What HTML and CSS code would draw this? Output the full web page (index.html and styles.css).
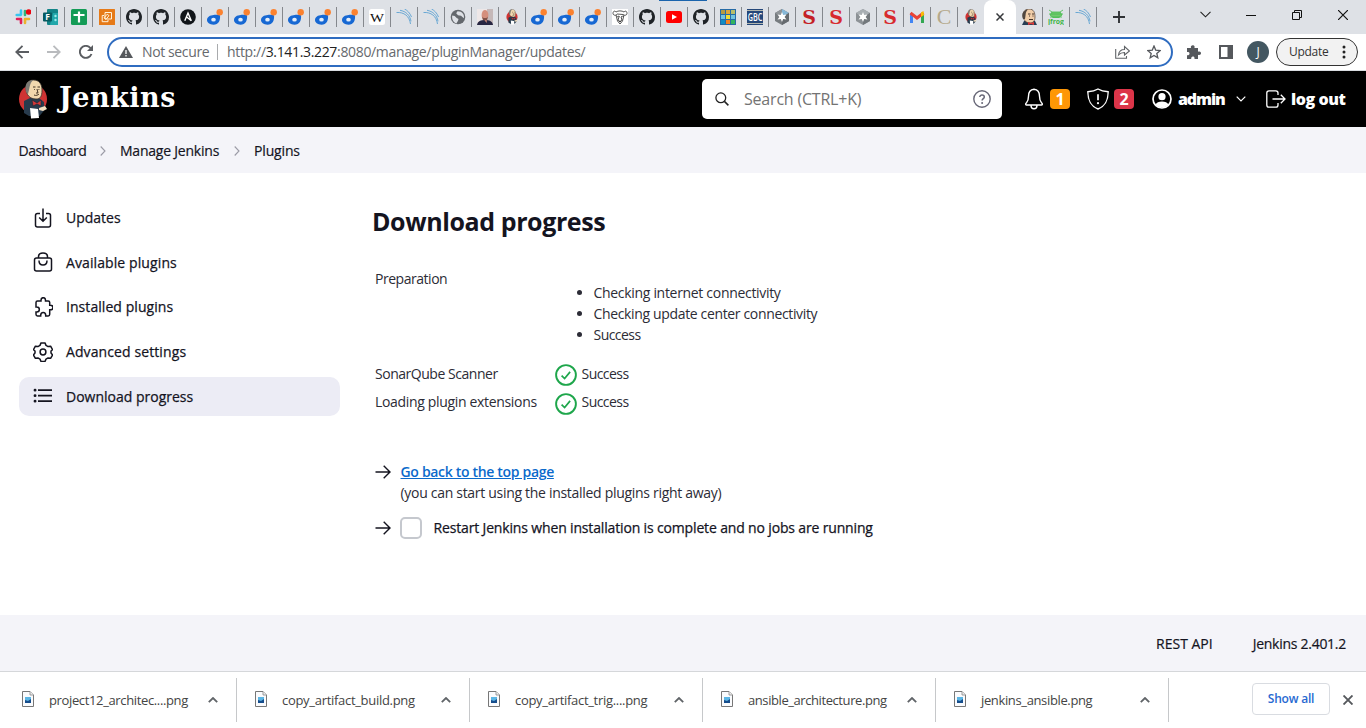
FILE: index.html
```html
<!DOCTYPE html>
<html lang="en">
<head>
<meta charset="utf-8">
<title>Download progress [Jenkins]</title>
<link rel="stylesheet" href="styles.css">
</head>
<body>
<svg class="defs" width="0" height="0">
  <symbol id="slack" viewBox="0 0 16 16"><g fill="none" stroke-width="2.6" stroke-linecap="round"><path stroke="#36c5f0" d="M6 1.5v4M1.7 6h4"/><path stroke="#2eb67d" d="M10 2v4"/><path stroke="#ecb22e" d="M10 10h4M10 10v4"/><path stroke="#e01e5a" d="M6 10v4M2 10h3"/></g><circle cx="13.6" cy="3" r="2.8" fill="#eb0510"/></symbol>
  <symbol id="aws" viewBox="0 0 16 16"><rect width="16" height="16" rx=".5" fill="#e67a18"/><g fill="none" stroke="#fff3dc"><path d="M6 3.5h6.500V10H6z"/><path d="M8.200 5.200l1.800 1.400-3 3.700-2-1.500zM5 6.500H3.200v6.200H9V11"/></g></symbol>
  <symbol id="sheets" viewBox="0 0 16 16"><rect width="16" height="16" rx="1.5" fill="#139b56"/><path d="M8 2.500v11M2.500 6h11" stroke="#fff" stroke-width="2.200"/></symbol>
  <symbol id="github" viewBox="0 0 16 16"><path fill="#1f2327" d="M8 0C3.58 0 0 3.58 0 8c0 3.54 2.29 6.53 5.47 7.59.4.07.55-.17.55-.38 0-.19-.01-.82-.01-1.49-2.01.37-2.53-.49-2.69-.94-.09-.23-.48-.94-.82-1.13-.28-.15-.68-.52-.01-.53.63-.01 1.08.58 1.23.82.72 1.21 1.87.87 2.33.66.07-.52.28-.87.51-1.07-1.78-.2-3.64-.89-3.64-3.95 0-.87.31-1.59.82-2.15-.08-.2-.36-1.02.08-2.12 0 0 .67-.21 2.2.82.64-.18 1.32-.27 2-.27s1.36.09 2 .27c1.53-1.04 2.2-.82 2.2-.82.44 1.1.16 1.92.08 2.12.51.56.82 1.27.82 2.15 0 3.07-1.87 3.75-3.65 3.95.29.25.54.73.54 1.48 0 1.07-.01 1.93-.01 2.2 0 .21.15.46.55.38A8.01 8.01 0 0 0 16 8c0-4.42-3.58-8-8-8z"/></symbol>
  <symbol id="ansible" viewBox="0 0 16 16"><circle cx="8" cy="8" r="7.8" fill="#111519"/><path d="M4.800 11.800L8 4l3.300 7.700L6.700 8" fill="none" stroke="#fff" stroke-width="1.400"/></symbol>
  <symbol id="drop" viewBox="0 0 16 16"><path d="M13 6.200c.6 5-1.400 9.500-6.500 9.500-4 0-6.500-2.200-6.500-4.700 0-3 3-5 6.700-5.100 2.300-.1 4.500 0 6.300.3z" fill="#1768d3"/><ellipse cx="6.500" cy="10.700" rx="2.300" ry="1.900" fill="#e5edf8"/><circle cx="12.700" cy="3.200" r="3.200" fill="#fb8230"/></symbol>
  <symbol id="sonar" viewBox="0 0 16 16"><g fill="none" stroke="#69a8d4"><path d="M.5 3.500C8 3 13.500 7 14.500 15"/><path d="M4 1.300c6 1 10 5 11 11"/><path d="M8.500 0c3 1.500 5.500 4 7 8"/></g></symbol>
  <symbol id="globe" viewBox="0 0 16 16"><circle cx="8" cy="8" r="7.300" fill="#64686d"/><path d="M2.200 6.500l2.500.4 2 2.200 1.800.8-.5 1.800-1.600 2.700C4 13.400 1.600 11 2.200 6.500zM7.500 2.200l-1.300 2L8 6.200l3 .5 2.800 2.500c1-3.600-1.700-7.100-6.300-7z" fill="#dee1e6"/></symbol>
  <symbol id="person" viewBox="0 0 16 16"><path fill="#eee7e7" d="M0 0h16v16H0z"/><path fill="#c5b8b8" d="M10 0h6v16h-6z"/><path d="M0 16c.5-4 4-5 8-5s7.500 1 8 5z" fill="#272642"/><path d="M6 9h4l-.4 5z" fill="#d58f7c"/><ellipse cx="8" cy="6" rx="3.400" ry="5" fill="#d58f7c"/><path d="M5 7.500c1 2 5 2 6 0l-1 3.800H6z" fill="#815248"/></symbol>
  <symbol id="jenkins" viewBox="0 0 28 40"><ellipse cx="14" cy="20" rx="14" ry="14.500" fill="#cf3333"/><path d="M5 22l6-3h9l5 4 .5 8-5 6H10l-5-3z" fill="#283b4d"/><path d="M7 9C7 3 10.500 1 14.500 1 20 1 23 5 23 11c0 7-2 9-6 9-6 0-10-4-10-11z" fill="#f1d8ae" stroke="#35312c" stroke-width=".8"/><path d="M7 13C5 5 9 1 14.500 1 11 3.500 11 7 10 11l-1 4z" fill="#7b7973"/><path d="M14 8h2.500M18.500 8H21M15 10.500h.8M19.500 10.500h.8M15 16c2 1 4 0 5-1M18 10l1 4h-2" stroke="#433425" fill="none"/><path d="M13 21l5 3 4-3v6l-4-2-4 2z" fill="#d33939" stroke="#172536" stroke-width=".6"/><path d="M11 29l8 1 1 9-8 .5z" fill="#fff"/><path d="M20 29l6-2 2 3-4 2-4-1z" fill="#f3dfc0"/></symbol>
  <symbol id="butler" viewBox="0 0 16 16"><path d="M1 16l2-4 5-1 6 1 2 4z" fill="#273e54"/><path d="M2 6C2 2 5 0 8 0c5 0 6 4 6 8 0 4-2 6-5 6-4 0-7-3-7-8z" fill="#f0cda8" stroke="#4b3a31" stroke-width=".7"/><path d="M2 10C0 4 3 1 7 .5 4 3 5 6 4 10z" fill="#504740"/><path d="M7 5h2.500M11 5h2M8 7h1M11.500 7h1M8 10.500h4" stroke="#453328"/><path d="M7 13l3 1 3-1v3l-3-1-3 1z" fill="#dc3939"/></symbol>
  <symbol id="gnu" viewBox="0 0 16 16"><path fill="#fff" d="M0 0h16v16H0z"/><g fill="none" stroke="#292929" stroke-width=".8"><path d="M4 3C2 1 1 3 1 4.500s2 2.500 4 1M12 3c2-2 3 0 3 1.500s-2 2.500-4 1M4 3c2-1.500 6-1.500 8 0M5 5l6 .5M4 6l1.500 6L8 15l2.500-3L12 6M5 8l2-1 .5 1M9 8l1.500-1 1 1M7 8l-1 3 2 1.500 2-1.500-1-3M7 12l1 1 1-1"/></g></symbol>
  <symbol id="youtube" viewBox="0 0 16 16"><rect y="2" width="16" height="12" rx="2.500" fill="#f00"/><path d="M6 5.200v5.600L11 8z" fill="#fff"/></symbol>
  <symbol id="grid" viewBox="0 0 16 16"><path fill="#276ba6" d="M0 0h16v16H0z"/><path fill="#b49b42" d="M1 1h4v4H1z"/><path fill="#dca53a" d="M6 1h4v4H6z"/><path fill="#b9be68" d="M11 1h4v4h-4z"/><path fill="#72c4df" d="M1 6h4v4H1zM11 6h4v4h-4z"/><path fill="#f1dd35" d="M6 6h4v4H6z"/><path fill="#128dc4" d="M1 11h4v4H1z"/><path fill="#f28424" d="M6 11h4v4H6z"/><path fill="#32b45e" d="M11 11h4v4h-4z"/></symbol>
  <symbol id="hex" viewBox="0 0 16 16"><path d="M8 0l7 4v8l-7 4-7-4V4z" fill="#8d9296"/><path d="M8 0l7 4-7 4-7-4z" fill="#a9afb3"/><path d="M8 8l7-4v8l-7 4z" fill="#74797d"/><path d="M8 3l1.200 3 3.300-.6L10.600 8l1.900 2.600-3.300-.6L8 13l-1.200-3-3.300.6L5.400 8 3.500 5.400l3.300.6z" fill="#fff"/></symbol>
  <symbol id="hexblue" viewBox="0 0 16 16"><path d="M8 0l7 4v8l-7 4-7-4V4z" fill="#777c80"/><path d="M8 0l7 4-7 4z" fill="#86b8d8"/><path d="M8 0L1 4l7 4z" fill="#8f9498"/><path d="M8 8l7-4v8l-7 4z" fill="#666b6f"/><path d="M8 3l1.200 3 3.300-.6L10.600 8l1.900 2.600-3.300-.6L8 13l-1.200-3-3.300.6L5.400 8 3.500 5.400l3.300.6z" fill="#fff"/></symbol>
  <symbol id="gmail" viewBox="0 0 16 16"><path d="M2.500 14V4" stroke="#4285f4" stroke-width="3"/><path d="M13.500 14V4" stroke="#34a853" stroke-width="3"/><path d="M1.500 4L8 9l6.500-5" fill="none" stroke="#ea4335" stroke-width="3"/><path d="M12 3.500l2.500-1.500L15 6l-3 2z" fill="#fbbc04"/></symbol>
  <symbol id="file" viewBox="0 0 12 16"><path d="M.5.5H8L11.500 4v11.500H.5z" fill="#fafbfd" stroke="#777"/><path d="M8 .5V4h3.500" fill="#eee" stroke="#888" stroke-width=".8"/><path fill="#164d8c" d="M3 6h6v6H3z"/><path fill="#5cb6e5" d="M3 6h6v2L6 10 3 9z"/></symbol>
  <symbol id="up" viewBox="0 0 10 6"><path d="M.8 5.200L5 1l4.200 4.200" fill="none" stroke="#606468" stroke-width="1.800"/></symbol>
  <symbol id="crumb" viewBox="0 0 6 10"><path d="M.7.5L5 5 .7 9.500" fill="none" stroke="#9b9ba6" stroke-width="1.100"/></symbol>
  <symbol id="arrow" viewBox="0 0 16 14"><path d="M.5 7h14M8.700.8L15 7l-6.300 6.200" fill="none" stroke="#14141f" stroke-width="1.400"/></symbol>
  <symbol id="ok" viewBox="0 0 22 22"><circle cx="11" cy="11" r="9.900" fill="none" stroke="#1ea64b" stroke-width="1.900"/><path d="M6.600 11.600l3 3 5.500-6.700" fill="none" stroke="#1ea64b" stroke-width="1.700"/></symbol>
</svg>

<header class="browser">
  <div class="tabstrip">
    <i class="load"></i>
    <div class="tab wide"><svg><use href="#slack"/></svg></div><div class="tab wide"><svg viewBox="0 0 16 16"><rect x="4" width="11" height="16" rx="1" fill="#138488"/><path d="M10 4h5v12H7z" fill="#21a7aa"/><circle cx="12.500" cy="7" r="1.200" fill="#9beced"/><circle cx="12.500" cy="11" r="1.200" fill="#9beced"/><rect y="3.500" width="9" height="9" rx="1" fill="#065b61"/><text x="2.300" y="11" font-size="8.500" font-weight="700" fill="#fff">F</text></svg></div><div class="tab wide"><svg><use href="#sheets"/></svg></div><div class="tab wide"><svg><use href="#aws"/></svg></div>
    <div class="tab"><svg><use href="#github"/></svg></div><div class="tab"><svg><use href="#github"/></svg></div><div class="tab"><svg><use href="#ansible"/></svg></div>
    <div class="tab"><svg><use href="#drop"/></svg></div><div class="tab"><svg><use href="#drop"/></svg></div><div class="tab"><svg><use href="#drop"/></svg></div><div class="tab"><svg><use href="#drop"/></svg></div><div class="tab"><svg><use href="#drop"/></svg></div><div class="tab"><svg><use href="#drop"/></svg></div>
    <div class="tab"><svg viewBox="0 0 16 16"><rect width="16" height="16" rx="2.500" fill="#fff"/><text class="serif" x="1" y="12.700" font-size="13.500" textLength="14" lengthAdjust="spacingAndGlyphs" fill="#111">W</text></svg></div><div class="tab"><svg><use href="#sonar"/></svg></div><div class="tab"><svg><use href="#sonar"/></svg></div><div class="tab"><svg><use href="#globe"/></svg></div><div class="tab"><svg><use href="#person"/></svg></div><div class="tab"><svg><use href="#jenkins"/></svg></div>
    <div class="tab"><svg><use href="#drop"/></svg></div><div class="tab"><svg><use href="#drop"/></svg></div><div class="tab"><svg><use href="#drop"/></svg></div><div class="tab"><svg><use href="#gnu"/></svg></div><div class="tab"><svg><use href="#github"/></svg></div><div class="tab"><svg><use href="#youtube"/></svg></div><div class="tab"><svg><use href="#github"/></svg></div>
    <div class="tab"><svg><use href="#grid"/></svg></div><div class="tab"><svg viewBox="0 0 16 16"><path fill="#254779" d="M0 0h16v16H0z"/><path stroke="#d8d4bd" stroke-width=".8" d="M0 1.500h16M0 14.500h16"/><text x=".7" y="12" font-size="11" font-weight="600" textLength="14.600" lengthAdjust="spacingAndGlyphs" fill="#fff">GBC</text></svg></div><div class="tab"><svg><use href="#hexblue"/></svg></div>
    <div class="tab"><span class="fav-s">S</span></div><div class="tab"><span class="fav-s light">S</span></div><div class="tab"><svg><use href="#hex"/></svg></div><div class="tab"><span class="fav-s light">S</span></div><div class="tab"><svg><use href="#gmail"/></svg></div><div class="tab"><span class="fav-c">C</span></div><div class="tab before"><svg><use href="#jenkins"/></svg></div>
    <div class="active"><svg width="8" height="8" viewBox="0 0 8 8"><path d="M.5.500l7 7m0-7l-7 7" stroke="#36383b" stroke-width="1.500"/></svg></div>
    <div class="tab"><svg><use href="#butler"/></svg></div><div class="tab"><svg viewBox="0 0 16 16"><path d="M1 1l3 2M15 1l-3 2M1 5h14M2 8h12M4 3h8l2 3-3 2.500H5L2 6z" stroke="#45bd4d" stroke-width=".8" fill="#72c86f"/><text x="0" y="14.500" font-size="7.500" font-weight="700" textLength="16" lengthAdjust="spacingAndGlyphs" fill="#3eb649">jfrog</text></svg></div><div class="tab"><svg><use href="#sonar"/></svg></div>
    <svg class="newtab" width="12" height="12" viewBox="0 0 12 12"><path d="M6 0v12M0 6h12" stroke="#303236" stroke-width="1.900"/></svg>
    <div class="window">
      <svg width="11" height="7" viewBox="0 0 11 7"><path d="M.5.800l5 5 5-5" fill="none" stroke="#222" stroke-width="1.100"/></svg>
      <svg width="10" height="10" viewBox="0 0 10 10"><path d="M0 5.500h10" stroke="#111"/></svg>
      <svg width="10" height="10" viewBox="0 0 10 10"><path d="M.5 2.500h7v7h-7zM2.500 2.500v-2h7v7h-2" fill="none" stroke="#111"/></svg>
      <svg width="10" height="10" viewBox="0 0 10 10"><path d="M0 0l10 10M10 0L0 10" stroke="#111" stroke-width="1.200"/></svg>
    </div>
  </div>
  <div class="toolbar">
    <svg class="back" width="14" height="14" viewBox="0 0 14 14"><path d="M14 7H1.500M7.500.8L1.300 7l6.200 6.200" fill="none" stroke="#5a5d61" stroke-width="1.800"/></svg>
    <svg class="forward" width="14" height="14" viewBox="0 0 14 14"><path d="M0 7h12.500M6.500.8L12.700 7l-6.200 6.200" fill="none" stroke="#b9bbbe" stroke-width="1.800"/></svg>
    <svg class="reload" width="14" height="14" viewBox="0 0 14 14"><path d="M12.500 9A6 6 0 1 1 11.300 2.800L13 4.600" fill="none" stroke="#5a5d61" stroke-width="1.900"/><path d="M14 0v6H8z" fill="#5a5d61"/></svg>
    <div class="omnibox">
      <svg width="14" height="12" viewBox="0 0 14 12"><path d="M7 0l7 12H0z" fill="#55585c"/><path d="M7 4v4M7 9v1.500" stroke="#fff" stroke-width="1.300"/></svg>
      <span class="notsecure">Not secure</span><i></i>
      <span class="url">http://<b>3.141.3.227</b>:8080/manage/pluginManager/updates/</span>
      <svg class="share" width="15" height="14" viewBox="0 0 15 14"><path d="M.7 4v9.300h10.800V11M3.500 10c.5-4 2.500-5.500 6-5.500V1.500l5 4.500-5 4V7.500c-3 0-4.500.7-6 2.500z" fill="none" stroke="#606367" stroke-width="1.100"/></svg>
      <svg width="14" height="14" viewBox="0 0 14 14"><path d="M7 1l1.700 4.100 4.500.4-3.400 2.900 1 4.400L7 10.500l-3.800 2.300 1-4.400L.8 5.500l4.500-.4z" fill="none" stroke="#55585c" stroke-width="1.300"/></svg>
    </div>
    <svg class="puzzle" width="15" height="15" viewBox="0 0 15 15"><path d="M1 3h4C4.200.8 6 0 7 .2c1.500.2 2 1.500 1.400 2.800H12v3.800c2-.8 3 .3 3 1.500s-1.300 2.200-3 1.400V14H8.500c.3-2-.7-2.500-1.700-2.500S5 12.500 5.200 14H1v-3.800c2 0 2.500-.8 2.500-1.800S2.800 6.800 1 7z" fill="#55585c"/></svg>
    <svg class="panel" width="14" height="14" viewBox="0 0 14 14"><path d="M0 0h14v14H0z" fill="#55585c"/><path d="M2 2h6.500v10H2z" fill="#fff"/></svg>
    <span class="avatar">J</span>
    <div class="update"><span>Update</span><svg width="4" height="14" viewBox="0 0 4 14"><g fill="#222"><circle cx="2" cy="2" r="1.500"/><circle cx="2" cy="7" r="1.500"/><circle cx="2" cy="12" r="1.500"/></g></svg></div>
  </div>
</header>

<div class="jheader">
  <svg class="logo" width="28" height="40"><use href="#jenkins"/></svg><span class="wordmark">Jenkins</span>
  <div class="search"><svg width="14" height="14" viewBox="0 0 14 14"><circle cx="5.800" cy="5.800" r="4.900" fill="none" stroke="#222" stroke-width="1.300"/><path d="M9.400 9.400l4 4" stroke="#222" stroke-width="1.500"/></svg><span>Search (CTRL+K)</span><svg width="18" height="18" viewBox="0 0 18 18"><circle cx="9" cy="9" r="8.200" fill="none" stroke="#676777" stroke-width="1.400"/><path d="M6.800 7.100c0-3 4.500-2.700 4.500-.2 0 1.700-2.200 1.700-2.200 3.600" fill="none" stroke="#676777" stroke-width="1.500"/><circle cx="9.100" cy="13" r="1" fill="#676777"/></svg></div>
  <svg class="bell" width="20" height="22" viewBox="0 0 20 22"><path d="M10 1.200c-4 .3-5.500 3.300-5.500 7 0 4.800-1.200 5.300-2.700 7.500-.4.700 0 1.300.7 1.300h15c.7 0 1.100-.6.700-1.300-1.500-2.200-2.700-2.700-2.700-7.500 0-3.700-1.500-6.700-5.500-7zM7 17.500c0 4.300 6 4.300 6 0" fill="none" stroke="#fff" stroke-width="1.400"/></svg>
  <span class="badge orange">1</span>
  <svg class="shield" width="22" height="22" viewBox="0 0 22 22"><path d="M11 1C8 2.800 4.500 3.500.8 3.800 1 12 3 18 11 21c8-3 10-9 10.200-17.200C17.500 3.500 14 2.800 11 1z" fill="none" stroke="#fff" stroke-width="1.400"/><path d="M11 6.200v6" stroke="#fff" stroke-width="1.700"/><circle cx="11" cy="15.200" r="1.100" fill="#fff"/></svg>
  <span class="badge red">2</span>
  <svg class="user" width="20" height="20" viewBox="0 0 20 20"><circle cx="10" cy="10" r="9" fill="none" stroke="#fff" stroke-width="1.700"/><circle cx="10" cy="7.700" r="3.600" fill="#fff"/><path d="M3.700 15.500c1-4 11.600-4 12.600 0-2.500 4-10 4-12.600 0z" fill="#fff"/></svg>
  <span class="admin">admin</span>
  <svg class="caret" width="10" height="6" viewBox="0 0 10 6"><path d="M.7.700L5 5 9.300.700" fill="none" stroke="#fff" stroke-width="1.200"/></svg>
  <svg class="exit" width="20" height="18" viewBox="0 0 20 18"><path d="M12 5V3c0-1.500-.8-2.200-2.200-2.200H3C1.600.8.800 1.600.8 3v12c0 1.400.8 2.200 2.200 2.200h6.800c1.400 0 2.200-.8 2.200-2.200v-2M6.500 9H19M14.800 4.800L19 9l-4.200 4.200" fill="none" stroke="#fff" stroke-width="1.300"/></svg>
  <span class="logout">log out</span>
</div>

<nav class="crumbs"><span class="c1">Dashboard</span><svg><use href="#crumb"/></svg><span class="c2">Manage Jenkins</span><svg><use href="#crumb"/></svg><span class="c3">Plugins</span></nav>

<main>
  <aside>
    <a><svg viewBox="0 0 20 20"><path d="M7 5.500H4.500c-1.200 0-2 .8-2 2V17c0 1.200.8 2 2 2h11c1.200 0 2-.8 2-2V7.500c0-1.200-.8-2-2-2H13M10 .5v12.700M6.200 9.500L10 13.300l3.800-3.800"/></svg><span>Updates</span></a>
    <a><svg viewBox="0 0 20 20"><rect x="1.500" y="6" width="17" height="13" rx="2"/><path d="M5.500 6V4.800C5.500-.3 14.500-.3 14.500 4.800V6M6 8.500c0 6 8 6 8 0"/></svg><span class="s2">Available plugins</span></a>
    <a><svg viewBox="0 0 20 20"><path d="M3 5.500c0-1 .5-1.500 1.500-1.500H8V3.200C8-.2 12.500-.2 12.500 3.200V4h2.700c1 0 1.500.6 1.500 1.500V8.200h.7c3.400 0 3.400 4.600 0 4.600h-.7v4.500c0 1-.5 1.700-1.500 1.700h-2.500v-.7c0-3.700-5-3.700-5 0v.7H4.500c-1 0-1.500-.7-1.500-1.700V15h.7c3.500 0 3.500-5 0-5H3z"/></svg><span class="s3">Installed plugins</span></a>
    <a><svg viewBox="0 0 20 20"><circle cx="10" cy="10" r="2.900"/><path d="M8 .9h4l1 2.500 2.100 1.200 2.500-.4 2 3.500L18 9v2l1.600 1.900-2 3.400-2.500-.4-2.100 1.200-1 2.400H8l-1-2.400-2.100-1.200-2.500.4-2-3.400L2 11V9L.4 7.700l2-3.500 2.500.4L7 3.400z" stroke-linejoin="round"/></svg><span class="s2">Advanced settings</span></a>
    <a class="selected"><svg viewBox="0 0 20 20"><path d="M5 4.200h14M5 9.700h14M5 15.200h14" stroke-width="1.700"/><path d="M2 4.200h.1M2 9.700h.1M2 15.200h.1" stroke-width="2.800" stroke-linecap="round"/></svg><span>Download progress</span></a>
  </aside>
  <section>
    <h1>Download progress</h1>
    <div class="progress">
      <div class="row prep"><span class="label w1">Preparation</span><ul><li class="l1">Checking internet connectivity</li><li class="l2">Checking update center connectivity</li><li class="l3">Success</li></ul></div>
      <div class="row"><span class="label w2">SonarQube Scanner</span><svg><use href="#ok"/></svg><span class="l3">Success</span></div>
      <div class="row last"><span class="label w3">Loading plugin extensions</span><svg><use href="#ok"/></svg><span class="l3">Success</span></div>
    </div>
    <div class="next"><svg><use href="#arrow"/></svg><div><a class="top">Go back to the top page</a><p>(you can start using the installed plugins right away)</p></div></div>
    <label class="next restart"><svg><use href="#arrow"/></svg><i class="check"></i><span>Restart Jenkins when installation is complete and no jobs are running</span></label>
  </section>
</main>
<footer><span class="rest">REST API</span><span class="version">Jenkins 2.401.2</span></footer>
<div class="downloads">
  <div class="dl"><svg class="file"><use href="#file"/></svg><span class="d1">project12_architec....png</span><svg class="up"><use href="#up"/></svg></div>
  <div class="dl"><svg class="file"><use href="#file"/></svg><span class="d2">copy_artifact_build.png</span><svg class="up"><use href="#up"/></svg></div>
  <div class="dl"><svg class="file"><use href="#file"/></svg><span class="d2">copy_artifact_trig....png</span><svg class="up"><use href="#up"/></svg></div>
  <div class="dl"><svg class="file"><use href="#file"/></svg><span class="d4">ansible_architecture.png</span><svg class="up"><use href="#up"/></svg></div>
  <div class="dl"><svg class="file"><use href="#file"/></svg><span class="d1">jenkins_ansible.png</span><svg class="up"><use href="#up"/></svg></div>
  <button>Show all</button><svg class="close" width="10" height="10" viewBox="0 0 10 10"><path d="M.5.500l9 9m0-9l-9 9" stroke="#55585c" stroke-width="1.900"/></svg>
</div>
</body>
</html>
```
FILE: styles.css
```css
* { box-sizing: border-box; }
body { margin: 0; width: 1366px; height: 728px; overflow: hidden; background: #fff; color: #14141f; font: 14px/21px "Open Sans", "Noto Sans", sans-serif; }
svg { display: block; flex: none; }
span, a, li, p, h1 { white-space: nowrap; }
.defs { position: absolute; }
.serif { font-family: "Liberation Serif", serif; }

.tabstrip { position: relative; height: 34px; background: #dee1e6; display: flex; align-items: center; padding-left: 9px; }
.load { position: absolute; left: 659px; top: 0; width: 48px; height: 1px; background: #1a64ad; }
.tab { width: 27px; height: 20px; flex: none; padding: 2px 0 0 5px; border-right: 1px solid #85888d; }
.tab.wide { width: 28px; padding-left: 6px; }
.tab svg { width: 16px; height: 16px; }
.tab.before { width: 26px; border: 0; }
.fav-s, .fav-c { display: block; width: 16px; height: 16px; text-align: center; line-height: 16px; }
.fav-s { font-family: "DejaVu Serif", serif; font-weight: 700; font-size: 19px; color: #c41f26; }
.fav-s.light { color: #d82a2e; }
.fav-c { font-family: "Liberation Serif", serif; font-size: 22px; color: #b5a98b; }
.active { width: 32px; height: 34px; background: #fff; border-radius: 8px 8px 0 0; display: flex; align-items: center; justify-content: center; }
.newtab { margin-left: 16px; }
.window { display: flex; align-items: center; margin: -5px 0 0 75px; gap: 36px; }
.window svg:first-child { margin-right: -1px; }
.toolbar { height: 37px; display: flex; align-items: center; padding-left: 15px; border-bottom: 1px solid #d9dce0; }
.forward { margin-left: 18px; }
.reload { margin-left: 18px; }
.omnibox { width: 1066px; height: 30px; margin-left: 14px; border: 2px solid #2f6cc0; border-radius: 15px; display: flex; align-items: center; padding: 0 10px; color: #66696d; }
.omnibox i { width: 1px; height: 16px; background: #a9abad; margin: 0 9px 0 8px; }
.notsecure { margin: -1px 0 0 9px; width: 67px; letter-spacing: -.38px; }
.url { margin-top: -1px; letter-spacing: -.34px; }
.url b { font-weight: 400; color: #222; }
.share { margin: 0 17px 0 auto; }
.puzzle { margin-left: 13px; }
.panel { margin-left: 18px; }
.avatar { width: 22px; height: 22px; margin-left: 14px; border-radius: 50%; background: #435761; color: #fff; text-align: center; font-size: 12px; }
.update { width: 82px; height: 28px; margin-left: 7px; border: 1px solid #333; border-radius: 14px; background: #f2f2f2; display: flex; align-items: center; padding-left: 12px; font-size: 12px; color: #333; letter-spacing: -.3px; }
.update span { margin-top: -1px; }
.update svg { margin-left: auto; margin-right: 11px; }

.jheader { height: 56px; background: #000; color: #fff; display: flex; align-items: center; padding-left: 19px; font-weight: 700; font-size: 16px; }
.wordmark { width: 120px; margin: -2px 0 0 12px; font: 700 27px/32px "DejaVu Serif", serif; letter-spacing: .5px; }
.search { width: 300px; height: 40px; margin-left: 523px; background: #fff; border-radius: 5px; display: flex; align-items: center; padding: 0 11px 0 13px; font-weight: 400; color: #737373; }
.search span { margin-left: 15px; flex: 1; letter-spacing: -.2px; }
.bell { margin-left: 22px; }
.badge { width: 20px; height: 20px; border-radius: 4px; text-align: center; line-height: 20px; }
.orange { margin-left: 6px; background: #fe9706; }
.red { margin-left: 5px; background: #dc3549; }
.shield { margin-left: 17px; }
.user { margin-left: 18px; }
.admin, .logout { font-weight: 800; }
.admin { margin-left: 6px; width: 48px; letter-spacing: -1.100px; }
.caret { margin-left: 10px; }
.exit { margin-left: 20px; }
.logout { margin-left: 5px; letter-spacing: -.45px; }

.crumbs { height: 46px; background: #f4f4f9; display: flex; align-items: center; padding: 2px 0 0 18.500px; -webkit-text-stroke: .2px; }
.crumbs svg { width: 6px; height: 10px; margin: 0 14px; }
.crumbs span { margin-top: -1px; }
.c1 { width: 67.500px; letter-spacing: -.5px; }
.c2 { width: 100px; letter-spacing: -.22px; }
.c3 { letter-spacing: -.15px; }

main { height: 442px; display: flex; }
aside { padding: 25px 0 0 19px; width: 340px; display: flex; flex-direction: column; gap: 5.700px; flex: none; }
aside a { height: 39px; border-radius: 10px; display: flex; align-items: center; padding-left: 14px; -webkit-text-stroke: .25px; }
aside svg { width: 20px; height: 20px; fill: none; stroke: #14141f; stroke-width: 1.500; }
aside span { margin-left: 13px; }
.s2 { letter-spacing: .1px; }
.s3 { letter-spacing: .06px; }
.selected { background: #ececf5; }
section { padding: 31px 0 0 33px; }
h1 { margin: 0 0 0 -1px; font-size: 25px; line-height: 34px; font-weight: 700; letter-spacing: -.4px; }
.progress { padding: 30px 0 0 2px; color: #2c2c36; }
.row { display: flex; height: 28px; align-items: center; }
.row svg { width: 22px; height: 22px; margin: 4px 4.500px 0 0; }
.last svg { margin-top: 6px; }
.label { width: 180px; }
.w1, .w2 { letter-spacing: -.47px; }
.w3 { letter-spacing: -.33px; }
.l1 { letter-spacing: -.31px; }
.l2 { letter-spacing: -.35px; }
.l3 { letter-spacing: -.55px; }
.prep { height: 91px; align-items: flex-start; }
ul { margin: 14px 0 0; padding-left: 38.500px; }
.next { display: flex; align-items: flex-start; margin: 46px 0 0 2px; }
.next svg { width: 16px; height: 14px; margin: 4px 9.500px 0 0; }
.next p { margin: 0; letter-spacing: -.3px; color: #2c2c36; }
.top { color: #0b6acb; font-weight: 600; text-decoration: underline; letter-spacing: -.32px; }
.restart { align-items: center; margin-top: 14px; }
.restart svg { margin: 0 9px 0 0; }
.restart span { margin-top: -1px; letter-spacing: -.155px; -webkit-text-stroke: .25px; }
.check { width: 22px; height: 22px; border: 2px solid #c5c8ce; border-radius: 5px; margin-right: 11.500px; }

footer { height: 56px; background: #f4f4f9; display: flex; justify-content: flex-end; align-items: center; gap: 40px; padding: 1px 20px 0 0; -webkit-text-stroke: .2px; }
.version { letter-spacing: -.27px; }
.downloads { height: 57px; border-top: 1px solid #d5d7da; display: flex; padding-top: 6px; font-size: 13px; color: #444; }
.dl { width: 233px; height: 44px; border-right: 1px solid #c6c8ca; display: flex; align-items: center; padding-left: 18px; }
.dl:first-child { width: 237px; padding-left: 22px; }
.file { width: 12px; height: 16px; margin-top: -3px; }
.dl span { margin-left: 15px; }
.d1 { letter-spacing: -.36px; }
.d2 { letter-spacing: -.3px; }
.d4 { letter-spacing: -.42px; }
.up { width: 10px; height: 6px; margin: 0 18px 0 auto; }
.downloads button { width: 78px; height: 32px; margin: 5px 0 0 83px; border: 1px solid #d9dce1; border-radius: 4px; background: #fff; font: 600 12px "Open Sans", sans-serif; letter-spacing: -.2px; color: #2869d1; padding: 0 0 2px; }
.close { margin: 17px 0 0 13px; }
```
